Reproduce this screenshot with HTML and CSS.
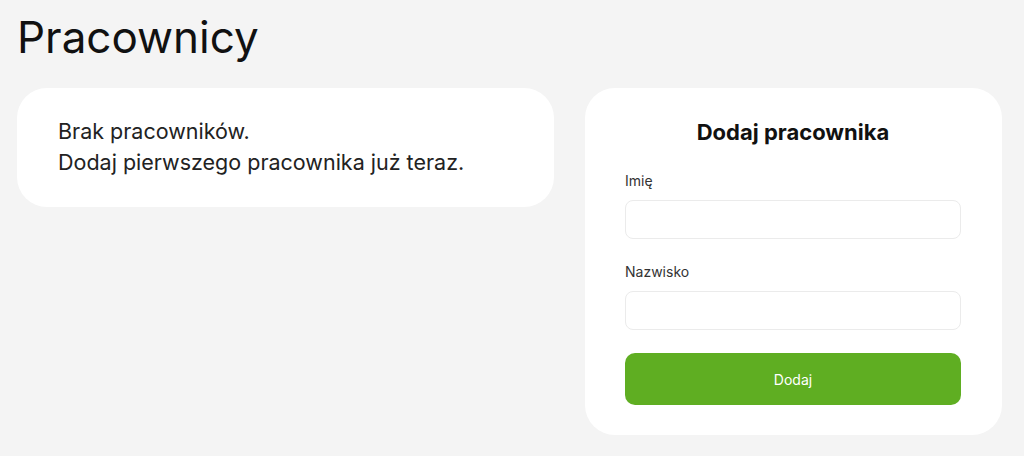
FILE: index.html
```html
<!DOCTYPE html>
<html lang="pl">
 <head>
  <meta charset="utf-8">
  <title>Pracownicy</title>
  <link rel="stylesheet" href="styles.css">
 </head>
 <body>
  <h1 class="page-title">Pracownicy</h1>

  <div class="layout">
   <div class="card empty">
    <p>Brak pracowników.<br>
    Dodaj pierwszego pracownika już teraz.</p>
   </div>

   <form class="card add-form">
    <h2>Dodaj pracownika</h2>
    <label class="field">
     <span>Imię</span>
     <input type="text" name="imie">
    </label>
    <label class="field">
     <span>Nazwisko</span>
     <input type="text" name="nazwisko">
    </label>
    <button type="button" class="btn-add">Dodaj</button>
   </form>
  </div>
 </body>
</html>
```

FILE: styles.css
```css
body { margin: 0; padding: 0 22px 0 17px; background: #f4f4f4;
       font-family: "Inter", "Lato", sans-serif; color: #1c1c1c; }

.page-title { margin: 0; padding-top: 9px; height: 88px; box-sizing: border-box;
              font-size: 44px; font-weight: 400; line-height: 56px; color: #111; }

.layout { display: grid; grid-template-columns: 537px 417px; column-gap: 31px;
          align-items: start; }

.card { background: #fff; border-radius: 30px; }

.empty { padding: 28px 41px 29px; }
.empty p { margin: 0; font-size: 21.5px; line-height: 31px; color: #222; }

.add-form { padding: 28px 41px 30px 40px; display: flex; flex-direction: column; }
.add-form h2 { margin: 0 0 24px; text-align: center; font-size: 22px; font-weight: 700;
               line-height: 32px; color: #111; }

.field { display: flex; flex-direction: column; margin-bottom: 24px; }
.field + .field { margin-bottom: 23px; }
.field span { font-size: 14px; line-height: 18px; color: #333; margin-bottom: 10px; }
.field input { height: 39px; box-sizing: border-box; border: 1px solid #ebebeb;
               border-radius: 8px; background: #fff; font: inherit; padding: 0 12px; }

.btn-add { height: 52px; border: 0; border-radius: 10px; background: #5fae22;
           color: #fff; font: inherit; font-size: 14px; cursor: pointer; }
```
